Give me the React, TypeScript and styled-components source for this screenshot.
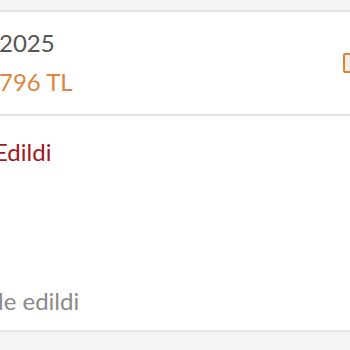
import React from "react";
import styled, { createGlobalStyle } from "styled-components";

const GlobalStyle = createGlobalStyle`
  html, body {
    margin: 0;
    padding: 0;
    background: #f4f4f4;
    font-family: Lato, "Open Sans", sans-serif;
  }
`;

const Page = styled.div`
  width: 350px;
  height: 350px;
  overflow: hidden;
  padding-top: 10px;
  box-sizing: border-box;
`;

const Card = styled.div`
  background: #ffffff;
  border-top: 2px solid #e6e6e6;
  border-bottom: 2px solid #e6e6e6;
`;

const Summary = styled.div`
  display: flex;
  align-items: center;
  justify-content: space-between;
  padding-top: 13px;
  padding-bottom: 14px;
  border-bottom: 2px solid #e4e4e4;
`;

const Column = styled.div`
  display: flex;
  flex-direction: column;
  gap: 3px;
`;

const Line = styled.div<{ $color: string; $shift?: number }>`
  font-size: 24px;
  line-height: 36px;
  color: ${(p) => p.$color};
  margin-left: ${(p) => p.$shift ?? 0}px;
  white-space: nowrap;
`;

const Badge = styled.div`
  width: 80px;
  height: 16px;
  border: 2px solid #e0823a;
  background: #fdeee2;
  border-radius: 2px;
  margin-right: -77px;
`;

const Status = styled.div`
  padding: 18px 0 11px;
  display: flex;
  flex-direction: column;
  gap: 113px;
`;

export default function App() {
  return (
    <>
      <GlobalStyle />
      <Page>
        <Card>
          <Summary>
            <Column>
              <Line $color="#555555" $shift={-1}>2025</Line>
              <Line $color="#e0853d" $shift={-1}>796 TL</Line>
            </Column>
            <Badge />
          </Summary>
          <Status>
            <Line $color="#a3161c" $shift={-6}>Edildi</Line>
            <Line $color="#8a8a8a" $shift={-2}>le edildi</Line>
          </Status>
        </Card>
      </Page>
    </>
  );
}
